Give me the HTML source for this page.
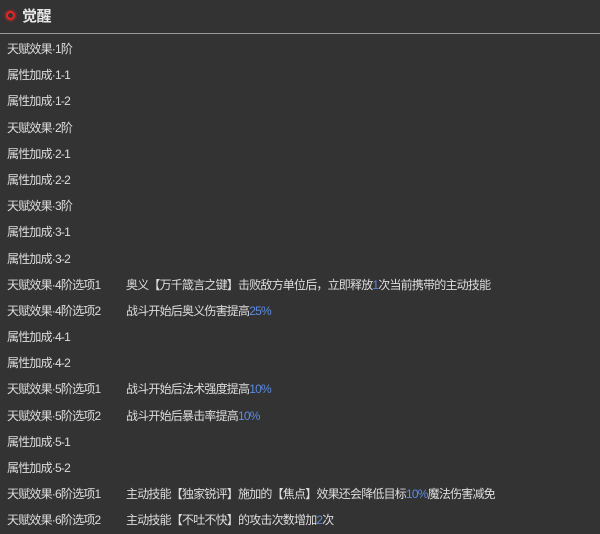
<!DOCTYPE html>
<html><head><meta charset="utf-8"><style>
body{margin:0;width:600px;height:531px;background:#333;overflow:hidden;font-family:"Liberation Sans","Noto Sans CJK SC",sans-serif;color:#ddd}
.h{position:absolute;left:0;top:0;width:600px;height:33px}
.dot{position:absolute;left:6px;top:11px;width:5px;height:5px;border:2px solid #e22;border-radius:50%;box-shadow:0 0 3px #f33}
.t{position:absolute;left:22px;top:5px;font-size:15px;font-weight:bold;color:#e8e8e8;letter-spacing:-0.5px}
.line{position:absolute;left:0;top:33px;width:600px;height:1px;background:#999}
.rows{position:absolute;left:7px;top:36px;font-size:12px;letter-spacing:-0.8px}
.r{height:26.2px;line-height:26.2px;position:relative;white-space:nowrap}
.r span{position:absolute;left:119px}
b{font-weight:normal;color:#5b8be0}
</style></head><body>
<div class="h"><div class="dot"></div><div class="t">觉醒</div></div>
<div class="line"></div>
<div class="rows">
<div class="r">天赋效果·1阶</div>
<div class="r">属性加成·1-1</div>
<div class="r">属性加成·1-2</div>
<div class="r">天赋效果·2阶</div>
<div class="r">属性加成·2-1</div>
<div class="r">属性加成·2-2</div>
<div class="r">天赋效果·3阶</div>
<div class="r">属性加成·3-1</div>
<div class="r">属性加成·3-2</div>
<div class="r">天赋效果·4阶选项1<span>奥义【万千箴言之键】击败敌方单位后，立即释放<b>1</b>次当前携带的主动技能</span></div>
<div class="r">天赋效果·4阶选项2<span>战斗开始后奥义伤害提高<b>25%</b></span></div>
<div class="r">属性加成·4-1</div>
<div class="r">属性加成·4-2</div>
<div class="r">天赋效果·5阶选项1<span>战斗开始后法术强度提高<b>10%</b></span></div>
<div class="r">天赋效果·5阶选项2<span>战斗开始后暴击率提高<b>10%</b></span></div>
<div class="r">属性加成·5-1</div>
<div class="r">属性加成·5-2</div>
<div class="r">天赋效果·6阶选项1<span>主动技能【独家锐评】施加的【焦点】效果还会降低目标<b>10%</b>魔法伤害减免</span></div>
<div class="r">天赋效果·6阶选项2<span>主动技能【不吐不快】的攻击次数增加<b>2</b>次</span></div>
</div>
</body></html>
